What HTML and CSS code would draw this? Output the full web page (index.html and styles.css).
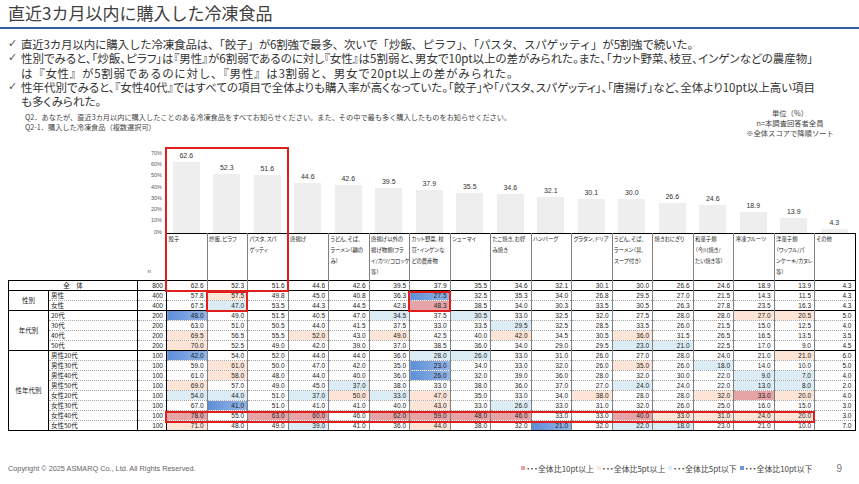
FILE: index.html
```html
<!DOCTYPE html>
<html lang="ja">
<head>
<meta charset="utf-8">
<title>直近3カ月以内に購入した冷凍食品</title>
<link rel="stylesheet" href="styles.css">
</head>
<body>
<header class="title-bar">
  <h1 class="title">直近3カ月以内に購入した冷凍食品</h1>
</header>

<ul class="points">
  <li><span class="check">✓</span><span class="ptext"><span class="ln ln-full">直近3カ月以内に購入した冷凍食品は、「餃子」が6割強で最多、次いで「炒飯、ピラフ」、「パスタ、スパゲッティ」が5割強で続いた。</span></span></li>
  <li><span class="check">✓</span><span class="ptext"><span class="ln ln-prop">性別でみると、「炒飯、ピラフ」は『男性』が6割弱であるのに対し『女性』は5割弱と、男女で10pt以上の差がみられた。また、「カット野菜、枝豆、インゲンなどの農産物」</span><span class="ln ln-wide">は『女性』が5割弱であるのに対し、『男性』は3割弱と、男女で20pt以上の差がみられた。</span></span></li>
  <li><span class="check">✓</span><span class="ptext"><span class="ln ln-prop">性年代別でみると、『女性40代』ではすべての項目で全体よりも購入率が高くなっていた。「餃子」や「パスタ、スパゲッティ」、「唐揚げ」など、全体より10pt以上高い項目</span><span class="ln ln-prop">も多くみられた。</span></span></li>
</ul>

<div class="info">
  <div class="question">
    <p>Q2．あなたが、直近3カ月以内に購入したことのある冷凍食品をすべてお知らせください。また、その中で最も多く購入したものをお知らせください。</p>
    <p>Q2-1．購入した冷凍食品（複数選択可）</p>
  </div>
  <div class="notes">
    <p>単位（%）</p>
    <p>n=本調査回答者全員</p>
    <p>※全体スコアで降順ソート</p>
  </div>
</div>

<section class="chart-area">
  <div class="chart">
    <div class="axis">
      <span class="tick">70%</span><span class="tick">60%</span><span class="tick">50%</span><span class="tick">40%</span><span class="tick">30%</span><span class="tick">20%</span><span class="tick">10%</span><span class="tick">0%</span>
    </div>
    <div class="bar-col"><span class="bar-val">62.6</span><span class="bar" style="height:71.4px"></span></div>
    <div class="bar-col"><span class="bar-val">52.3</span><span class="bar" style="height:59.6px"></span></div>
    <div class="bar-col"><span class="bar-val">51.6</span><span class="bar" style="height:58.8px"></span></div>
    <div class="bar-col"><span class="bar-val">44.6</span><span class="bar" style="height:50.8px"></span></div>
    <div class="bar-col"><span class="bar-val">42.6</span><span class="bar" style="height:48.6px"></span></div>
    <div class="bar-col"><span class="bar-val">39.5</span><span class="bar" style="height:45.0px"></span></div>
    <div class="bar-col"><span class="bar-val">37.9</span><span class="bar" style="height:43.2px"></span></div>
    <div class="bar-col"><span class="bar-val">35.5</span><span class="bar" style="height:40.5px"></span></div>
    <div class="bar-col"><span class="bar-val">34.6</span><span class="bar" style="height:39.4px"></span></div>
    <div class="bar-col"><span class="bar-val">32.1</span><span class="bar" style="height:36.6px"></span></div>
    <div class="bar-col"><span class="bar-val">30.1</span><span class="bar" style="height:34.3px"></span></div>
    <div class="bar-col"><span class="bar-val">30.0</span><span class="bar" style="height:34.2px"></span></div>
    <div class="bar-col"><span class="bar-val">26.6</span><span class="bar" style="height:30.3px"></span></div>
    <div class="bar-col"><span class="bar-val">24.6</span><span class="bar" style="height:28.0px"></span></div>
    <div class="bar-col"><span class="bar-val">18.9</span><span class="bar" style="height:21.5px"></span></div>
    <div class="bar-col"><span class="bar-val">13.9</span><span class="bar" style="height:15.8px"></span></div>
    <div class="bar-col"><span class="bar-val">4.3</span><span class="bar" style="height:4.9px"></span></div>
  </div>

  <table class="data">
    <colgroup>
      <col class="c-cat"><col class="c-label"><col class="c-n">
      <col class="c-val"><col class="c-val"><col class="c-val"><col class="c-val"><col class="c-val"><col class="c-val"><col class="c-val"><col class="c-val"><col class="c-val"><col class="c-val"><col class="c-val"><col class="c-val"><col class="c-val"><col class="c-val"><col class="c-val"><col class="c-val"><col class="c-val">
    </colgroup>
    <thead>
      <tr class="head">
        <th class="blank" colspan="2"></th>
        <th class="n-head"><div class="n-text">n</div></th>
        <th class="item"><div class="item-text">餃子</div></th>
        <th class="item"><div class="item-text">炒飯、ピラフ</div></th>
        <th class="item"><div class="item-text">パスタ、スパ<br>ゲッティ</div></th>
        <th class="item"><div class="item-text">唐揚げ</div></th>
        <th class="item"><div class="item-text">うどん、そば、<br>ラーメン（麺の<br>み）</div></th>
        <th class="item"><div class="item-text">唐揚げ以外の<br>揚げ物類(フラ<br>イ/カツ/コロッケ<br>等）</div></th>
        <th class="item"><div class="item-text">カット野菜、枝<br>豆・インゲンな<br>どの農産物</div></th>
        <th class="item"><div class="item-text">シューマイ</div></th>
        <th class="item"><div class="item-text">たこ焼き、お好<br>み焼き</div></th>
        <th class="item"><div class="item-text">ハンバーグ</div></th>
        <th class="item"><div class="item-text">グラタン、ドリア</div></th>
        <th class="item"><div class="item-text">うどん、そば、<br>ラーメン（具、<br>スープ付き）</div></th>
        <th class="item"><div class="item-text">焼きおにぎり</div></th>
        <th class="item"><div class="item-text">和菓子類<br>（今川焼き/<br>たい焼き等）</div></th>
        <th class="item"><div class="item-text">冷凍フルーツ</div></th>
        <th class="item"><div class="item-text">洋菓子類<br>（ワッフル/パ<br>ンケーキ/カヌレ<br>等）</div></th>
        <th class="item"><div class="item-text">その他</div></th>
      </tr>
    </thead>
    <tbody>
      <tr class="g-start">
        <th class="total-label" colspan="2">全　体</th><td class="n">800</td>
        <td>62.6</td><td>52.3</td><td>51.6</td><td>44.6</td><td>42.6</td><td>39.5</td><td>37.9</td><td>35.5</td><td>34.6</td><td>32.1</td><td>30.1</td><td>30.0</td><td>26.6</td><td>24.6</td><td>18.9</td><td>13.9</td><td>4.3</td>
      </tr>
      <tr class="g-start">
        <th class="cat" rowspan="2">性別</th><th class="lbl">男性</th><td class="n">400</td>
        <td>57.8</td><td class="o">57.5</td><td>49.8</td><td>45.0</td><td>40.8</td><td>36.3</td><td class="d">27.5</td><td>32.5</td><td>35.3</td><td>34.0</td><td>26.8</td><td>29.5</td><td>27.0</td><td>21.5</td><td>14.3</td><td>11.5</td><td>4.3</td>
      </tr>
      <tr>
        <th class="lbl">女性</th><td class="n">400</td>
        <td>67.5</td><td class="b">47.0</td><td>53.5</td><td>44.3</td><td>44.5</td><td>42.8</td><td class="r">48.3</td><td>38.5</td><td>34.0</td><td>30.3</td><td>33.5</td><td>30.5</td><td>26.3</td><td>27.8</td><td>23.5</td><td>16.3</td><td>4.3</td>
      </tr>
      <tr class="g-start">
        <th class="cat" rowspan="4">年代別</th><th class="lbl">20代</th><td class="n">200</td>
        <td class="d">48.0</td><td>49.0</td><td>51.5</td><td>40.5</td><td>47.0</td><td class="b">34.5</td><td>37.5</td><td class="b">30.5</td><td>33.0</td><td>32.5</td><td>32.0</td><td>27.5</td><td>28.0</td><td>28.0</td><td class="o">27.0</td><td class="o">20.5</td><td>5.0</td>
      </tr>
      <tr>
        <th class="lbl">30代</th><td class="n">200</td>
        <td>63.0</td><td>51.0</td><td>50.5</td><td>44.0</td><td>41.5</td><td>37.5</td><td>33.0</td><td>33.5</td><td class="b">29.5</td><td>32.5</td><td>28.5</td><td>33.5</td><td>26.0</td><td>21.5</td><td>15.0</td><td>12.5</td><td>4.0</td>
      </tr>
      <tr>
        <th class="lbl">40代</th><td class="n">200</td>
        <td class="o">69.5</td><td>56.5</td><td>55.5</td><td class="o">52.0</td><td>43.0</td><td class="o">49.0</td><td>42.5</td><td>40.0</td><td class="o">42.0</td><td>34.5</td><td>30.5</td><td class="o">36.0</td><td>31.5</td><td>26.5</td><td>16.5</td><td>13.5</td><td>3.5</td>
      </tr>
      <tr>
        <th class="lbl">50代</th><td class="n">200</td>
        <td class="o">70.0</td><td>52.5</td><td>49.0</td><td>42.0</td><td>39.0</td><td>37.0</td><td>38.5</td><td>36.0</td><td>34.0</td><td>29.0</td><td>29.5</td><td class="b">23.0</td><td class="b">21.0</td><td>22.5</td><td>17.0</td><td>9.0</td><td>4.5</td>
      </tr>
      <tr class="g-start">
        <th class="cat" rowspan="8">性年代別</th><th class="lbl">男性20代</th><td class="n">100</td>
        <td class="d">42.0</td><td>54.0</td><td>52.0</td><td>44.0</td><td>44.0</td><td>36.0</td><td class="b">28.0</td><td class="b">26.0</td><td>33.0</td><td>31.0</td><td>26.0</td><td>27.0</td><td>28.0</td><td>24.0</td><td>21.0</td><td class="o">21.0</td><td>6.0</td>
      </tr>
      <tr>
        <th class="lbl">男性30代</th><td class="n">100</td>
        <td>59.0</td><td class="o">61.0</td><td>50.0</td><td>47.0</td><td>42.0</td><td>35.0</td><td class="d">23.0</td><td>34.0</td><td>33.0</td><td>32.0</td><td>26.0</td><td class="o">35.0</td><td>26.0</td><td class="b">18.0</td><td>14.0</td><td>10.0</td><td>5.0</td>
      </tr>
      <tr>
        <th class="lbl">男性40代</th><td class="n">100</td>
        <td>61.0</td><td class="o">58.0</td><td>48.0</td><td>44.0</td><td>40.0</td><td>36.0</td><td class="d">26.0</td><td>32.0</td><td>39.0</td><td>36.0</td><td>28.0</td><td>32.0</td><td>30.0</td><td>22.0</td><td class="b">9.0</td><td class="b">7.0</td><td>4.0</td>
      </tr>
      <tr>
        <th class="lbl">男性50代</th><td class="n">100</td>
        <td class="o">69.0</td><td>57.0</td><td>49.0</td><td>45.0</td><td class="b">37.0</td><td>38.0</td><td>33.0</td><td>38.0</td><td>36.0</td><td>37.0</td><td>27.0</td><td class="b">24.0</td><td>24.0</td><td>22.0</td><td class="b">13.0</td><td class="b">8.0</td><td>2.0</td>
      </tr>
      <tr>
        <th class="lbl">女性20代</th><td class="n">100</td>
        <td class="b">54.0</td><td class="b">44.0</td><td>51.0</td><td class="b">37.0</td><td class="o">50.0</td><td class="b">33.0</td><td class="o">47.0</td><td>35.0</td><td>33.0</td><td>34.0</td><td class="o">38.0</td><td>28.0</td><td>28.0</td><td class="o">32.0</td><td class="r">33.0</td><td class="o">20.0</td><td>4.0</td>
      </tr>
      <tr>
        <th class="lbl">女性30代</th><td class="n">100</td>
        <td>67.0</td><td class="d">41.0</td><td>51.0</td><td>41.0</td><td>41.0</td><td>40.0</td><td class="o">43.0</td><td>33.0</td><td class="b">26.0</td><td>33.0</td><td>31.0</td><td>32.0</td><td>26.0</td><td>25.0</td><td>16.0</td><td>15.0</td><td>3.0</td>
      </tr>
      <tr>
        <th class="lbl">女性40代</th><td class="n">100</td>
        <td class="r">78.0</td><td>55.0</td><td class="r">63.0</td><td class="r">60.0</td><td>46.0</td><td class="r">62.0</td><td class="r">59.0</td><td class="r">48.0</td><td class="r">46.0</td><td>33.0</td><td>33.0</td><td class="r">40.0</td><td class="o">33.0</td><td class="o">31.0</td><td class="o">24.0</td><td class="o">20.0</td><td>3.0</td>
      </tr>
      <tr class="last">
        <th class="lbl">女性50代</th><td class="n">100</td>
        <td class="o">71.0</td><td>48.0</td><td>49.0</td><td class="b">39.0</td><td>41.0</td><td>36.0</td><td class="o">44.0</td><td>38.0</td><td>32.0</td><td class="d">21.0</td><td>32.0</td><td class="b">22.0</td><td class="b">18.0</td><td>23.0</td><td>21.0</td><td>10.0</td><td>7.0</td>
      </tr>
    </tbody>
  </table>

  <div class="hl hl-top3"></div>
  <div class="hl hl-sex-col2"></div>
  <div class="hl hl-sex-col7"></div>
  <div class="hl hl-f40"></div>
</section>

<footer class="footer">
  <span class="copyright">Copyright © 2025 ASMARQ Co., Ltd. All Rights Reserved.</span>
  <div class="legend">
    <span class="sw sw-r"></span><span class="lg">・・・全体比10pt以上</span>
    <span class="sw sw-o"></span><span class="lg">・・・全体比5pt以上</span>
    <span class="sw sw-b"></span><span class="lg">・・・全体比5pt以下</span>
    <span class="sw sw-d"></span><span class="lg">・・・全体比10pt以下</span>
  </div>
  <span class="page">9</span>
</footer>
</body>
</html>
```

FILE: styles.css
```css
html, body {
  margin: 0;
  padding: 0;
}
body {
  width: 859px;
  height: 484px;
  overflow: hidden;
  background: #ffffff;
  color: #333333;
  font-family: "Noto Sans CJK JP", "Liberation Sans", sans-serif;
}
p {
  margin: 0;
}

/* title */
.title-bar {
  border-bottom: 2px solid #2f5e99;
  padding: 1px 8px 2px;
}
.title {
  margin: 0;
  font-size: 17px;
  line-height: 24px;
  font-weight: normal;
  color: #404040;
}

/* bullet points */
.points {
  list-style: none;
  margin: 8px 0 0;
  padding: 0 0 0 8px;
  font-size: 11.5px;
  line-height: 14.3px;
  color: #333333;
  white-space: nowrap;
}
.points li {
  display: flex;
}
.check {
  flex: none;
  width: 13px;
  font-family: "DejaVu Sans", sans-serif;
  font-size: 11px;
  color: #555555;
}
.ptext {
  display: flex;
  flex-direction: column;
}
.ln {
  display: block;
}
.ln-full {
  letter-spacing: -0.2px;
}
.ln-wide {
  letter-spacing: 0.7px;
}
.ln-prop {
  font-feature-settings: "palt";
}

/* question + notes */
.info {
  display: flex;
  justify-content: space-between;
  height: 30px;
  padding-left: 25px;
}
.question {
  margin-top: 4px;
  font-size: 7.2px;
  line-height: 10px;
  color: #444444;
}
.notes {
  width: 110px;
  margin-right: 14px;
  text-align: center;
  font-size: 7.3px;
  line-height: 10px;
  color: #444444;
}

/* chart */
.chart-area {
  position: relative;
  width: 846.5px;
  margin: 9px 0 0 8px;
}
.chart {
  display: flex;
  align-items: flex-end;
  height: 86px;
}
.axis {
  flex: none;
  width: 158px;
  box-sizing: border-box;
  padding-right: 4px;
  margin-bottom: -4.6px;
  display: flex;
  flex-direction: column;
  align-items: flex-end;
}
.tick {
  height: 11.3px;
  line-height: 11.3px;
  font-size: 5.5px;
  color: #595959;
  font-family: "Liberation Sans", sans-serif;
}
.bar-col {
  flex: none;
  width: 40.5px;
  height: 100%;
  display: flex;
  flex-direction: column;
  align-items: center;
  justify-content: flex-end;
}
.bar-val {
  font-family: "Liberation Sans", sans-serif;
  font-size: 7px;
  line-height: 10px;
  margin-bottom: 1px;
  color: #333333;
}
.bar {
  display: block;
  width: 27px;
  background: #eeeeee;
}

/* table */
.data {
  border-collapse: collapse;
  table-layout: fixed;
  width: 846.5px;
  font-size: 6.5px;
  color: #222222;
}
.c-cat { width: 40px; }
.c-label { width: 89px; }
.c-n { width: 29px; }
.c-val { width: 40.5px; }

.data tbody th,
.data tbody td {
  padding: 0;
  height: 9px;
  line-height: 9px;
  white-space: nowrap;
  overflow: hidden;
  font-weight: normal;
}
.data td {
  text-align: right;
  font-family: "Liberation Sans", sans-serif;
  border-left: 1px solid #808080;
  border-right: 1px solid #808080;
  border-bottom: 1px dotted #a6a6a6;
}
.data tbody td {
  padding-right: 3px;
}
.data td:last-child {
  border-right: 1px solid #000000;
}
.data td.n {
  border-right: 1px solid #000000;
}
.data .lbl {
  text-align: left;
  padding-left: 2px;
  border-right: 1px solid #000000;
  border-bottom: 1px dotted #a6a6a6;
}
.data .cat,
.data .total-label {
  text-align: center;
  border-left: 1.5px solid #000000;
  border-right: 1px solid #000000;
  border-bottom: 1px solid #000000;
}
.data .g-start th,
.data .g-start td {
  border-top: 1px solid #000000;
}
.data .last th,
.data .last td {
  border-bottom: 1px solid #000000;
}

/* header labels */
.data .head th {
  padding: 0;
  vertical-align: top;
  text-align: left;
  font-weight: normal;
}
.data .head .blank {
  border: none;
}
.data .head .n-head {
  border: none;
}
.n-text {
  height: 46px;
  box-sizing: border-box;
  padding: 33px 0 0 10px;
  font-family: "Liberation Sans", sans-serif;
  font-size: 6px;
  line-height: 8px;
  color: #444444;
}
.data .head .item {
  border-top: 1px solid #000000;
  border-left: 1px solid #808080;
  border-right: 1px solid #808080;
}
.data .head .item:last-child {
  border-right: 1px solid #000000;
}
.item-text {
  height: 46px;
  padding-left: 1.5px;
  font-size: 5.4px;
  line-height: 11px;
  color: #222222;
  white-space: nowrap;
  font-feature-settings: "palt";
}

/* difference colours */
.data td.r { background: #e6a4a7; }
.data td.o { background: #fce4d6; }
.data td.b { background: #dbecf4; }
.data td.d { background: linear-gradient(90deg, #5e8ed7, #93b6e8); }

/* red highlight frames over the chart/table */
.hl {
  position: absolute;
  box-sizing: border-box;
  border: 2px solid #e01e1e;
  pointer-events: none;
}
.hl-top3 { left: 157px; top: 0; width: 124px; height: 145px; }
.hl-sex-col2 { left: 197.5px; top: 144px; width: 42.5px; height: 21px; }
.hl-sex-col7 { left: 400px; top: 144px; width: 42.5px; height: 21px; }
.hl-f40 { left: 157px; top: 264px; width: 650px; height: 12px; }

/* footer */
.footer {
  display: flex;
  align-items: center;
  height: 14px;
  margin-top: 30px;
  padding: 0 8px;
}
.copyright {
  flex: 1;
  font-family: "Liberation Sans", sans-serif;
  font-size: 7.3px;
  color: #666666;
}
.legend {
  display: flex;
  align-items: center;
  font-size: 7.9px;
  color: #444444;
  font-feature-settings: "palt";
}
.sw {
  display: block;
  width: 4px;
  height: 4px;
  margin: 0 1px 0 3px;
}
.sw-r { background: #e6a4a7; }
.sw-o { background: #fde9dc; }
.sw-b { background: #dbecf4; }
.sw-d { background: #6f98d8; }
.page {
  margin-left: 24px;
  margin-right: 9px;
  font-family: "Liberation Sans", sans-serif;
  font-size: 10px;
  color: #777777;
}
```
